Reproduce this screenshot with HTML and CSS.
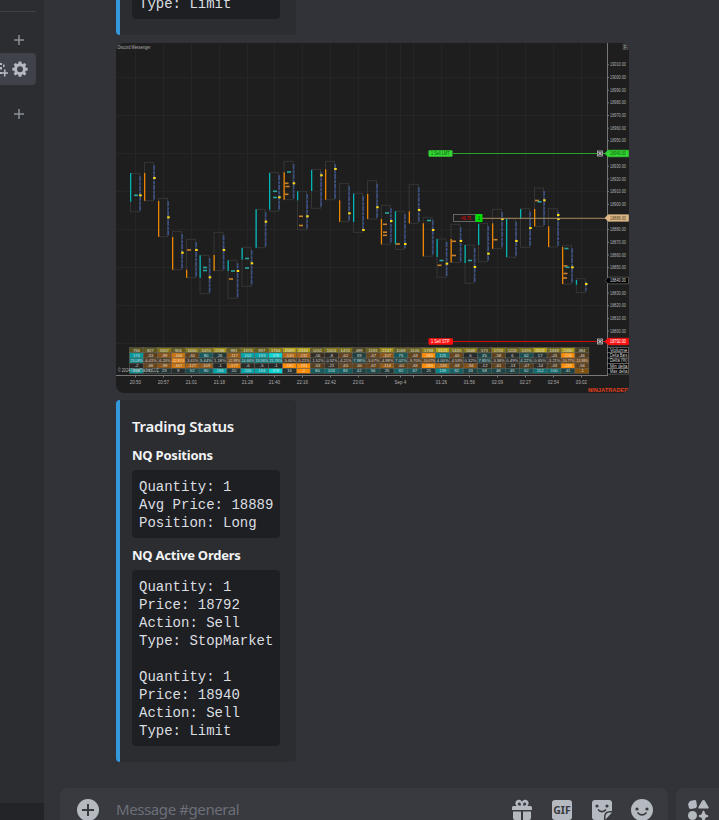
FILE: index.html
```html
<!DOCTYPE html>
<html lang="en">
<head>
<meta charset="utf-8">
<title>#general</title>
<link rel="stylesheet" href="styles.css">
</head>
<body>
<div class="app">
  <aside class="sidebar">
    <div class="channels">
      <div class="divider"></div>
      <div class="category first"><svg class="plus" viewBox="0 0 12 12"><path d="M6 1v10M1 6h10"/></svg></div>
      <div class="channel">
        <svg class="invite" viewBox="0 0 8 16"><path d="M0 2h2v2H0zM3 3.500h1.500V6H3zM0 6h2v2.500H0zM0 11h2v2H0zM4 8.500h1.500v2.700H8v1.500H5.500v2.800H4v-2.800H1.800v-1.500H4z"/></svg>
        <svg class="gear" viewBox="0 0 16 16"><path fill-rule="evenodd" d="M6.700.5h2.600l.4 2 1.200.5L12.600 1.900l1.700 1.800-1.100 1.600.5 1.300 2 .3v2.500l-2 .4-.5 1.200 1.100 1.700-1.700 1.700-1.700-1.100-1.200.5-.4 2H6.700l-.4-2-1.200-.5-1.700 1.100-1.700-1.700 1.100-1.700-.5-1.200-2-.4V6.900l2-.3.500-1.300-1.100-1.600L3.400 1.900 5.100 3l1.200-.5zM8 5.200a3 3 0 1 0 0 6 3 3 0 0 0 0-6z"/></svg>
      </div>
      <div class="category second"><svg class="plus" viewBox="0 0 12 12"><path d="M6 1v10M1 6h10"/></svg></div>
    </div>
    <div class="user-panel"></div>
  </aside>
  <main class="chat">
    <div class="messages">
      <section class="embed previous"><pre class="code">Type: Limit</pre></section>
      <svg id="chart" class="chart" viewBox="116 43 513 350"></svg>
      <section class="embed">
        <h3 class="title">Trading Status</h3>
        <h4 class="field">NQ Positions</h4>
        <pre class="code">Quantity: 1
Avg Price: 18889
Position: Long</pre>
        <h4 class="field orders">NQ Active Orders</h4>
        <pre class="code">Quantity: 1
Price: 18792
Action: Sell
Type: StopMarket

Quantity: 1
Price: 18940
Action: Sell
Type: Limit</pre>
      </section>
    </div>
    <footer class="composer">
      <div class="input">
        <svg class="add" viewBox="0 0 22 22"><circle cx="11" cy="11" r="11"/><path d="M11 5v12M5 11h12"/></svg>
        <span class="placeholder">Message #general</span>
        <div class="tools">
          <svg viewBox="0 0 24 24"><path class="fg" d="M2 9.500q0-1.500 1.500-1.500h3.200A3.500 3.500 0 1 1 12 3.700 3.500 3.500 0 1 1 17.300 8h3.200q1.500 0 1.500 1.500V12H2zM3 13.500h8V22H5q-2 0-2-2zM13 13.500h8V20q0 2-2 2h-6z"/><path class="hole" d="M11 7.500H9a1.500 1.500 0 1 1 1.700-2zM13 7.500h2a1.500 1.500 0 1 0-1.700-2z"/></svg>
          <svg viewBox="0 0 24 24"><rect class="fg" x="2" y="2" width="20" height="20" rx="3"/><text class="gif" x="12" y="16">GIF</text></svg>
          <svg viewBox="0 0 24 24"><path class="fg" d="M5 2h14q3 0 3 3v8h-2q-6 0-6 6v3H5q-3 0-3-3V5q0-3 3-3zM15.500 21.500V19q0-4.500 4.500-4.500h2z"/><g class="hole"><circle cx="7" cy="8" r="1.600"/><circle cx="17" cy="8" r="1.600"/></g><path class="smile" d="M8.500 12q3.500 3.500 7 0"/></svg>
          <svg viewBox="0 0 24 24"><circle class="fg" cx="12" cy="12" r="11"/><g class="hole"><circle cx="7" cy="11" r="1.600"/><circle cx="17" cy="11" r="1.600"/></g><path class="smile" d="M8 15q4 4 8 0"/></svg>
        </div>
      </div>
      <div class="apps">
        <svg viewBox="0 0 24 24"><path class="fg" d="M4 3l5-1q1 0 1.200 1l.8 5-1 2-5 1q-1.500 0-2-1L2 6zM17.500 2q1 0 1.500 1l3.500 6q.5 1.500-1 1.500h-8q-1.500 0-1-1.500L16 3q.5-1 1.500-1zM17.500 12.500q1 0 1.500 2.500 0 1 1 1.500 2.500.500 2.500 1.500t-2.500 1.500q-1 .500-1 1.500-.500 2.500-1.500 2.500T16 21q0-1-1-1.500-2.500-.500-2.500-1.500t2.500-1.500q1-.500 1-1.500.500-2.500 1.500-2.500z"/><circle class="fg" cx="6.500" cy="17.500" r="4.500"/></svg>
      </div>
    </footer>
  </main>
</div>
<script src="chart.js"></script>
</body>
</html>
```
FILE: styles.css
```css
* { box-sizing: border-box; }
body { margin: 0; background: #313338; color: #dbdee1; font-family: "Noto Sans", sans-serif; overflow: hidden; }
.app { display: flex; height: 820px; width: 719px; overflow: hidden; }
.sidebar { display: flex; flex-direction: column; width: 44px; background: #2b2d31; }
.channels { flex: 1; padding-top: 11px; }
.divider { width: 36px; height: 1px; background: #3f4147; }
.category { display: flex; justify-content: flex-end; width: 25px; }
.category.first { margin-top: 22px; }
.category.second { margin-top: 23px; }
.plus { width: 12px; height: 12px; fill: none; stroke: #8b8e96; stroke-width: 1.5; }
.channel { display: flex; align-items: center; gap: 4px; width: 36px; height: 32px; margin-top: 7px; border-radius: 0 4px 4px 0; background: #404249; }
.channel svg { fill: #b5bac1; height: 16px; }
.invite { width: 8px; }
.gear { width: 16px; }
.user-panel { height: 17px; background: #232428; }
.chat { display: flex; flex-direction: column; flex: 1; min-width: 0; }
.messages { display: flex; flex-direction: column; align-items: flex-start; height: 788px; padding-left: 72px; }
.embed { width: 180px; height: 362px; margin-top: 7px; padding: 16px 16px 16px 12px; border-left: 4px solid #3498db; border-radius: 4px; background: #2b2d31; }
.embed.previous { display: flex; align-items: flex-end; height: 35px; margin-top: 0; border-radius: 0 0 4px 4px; }
.chart { width: 513px; height: 350px; margin-top: 8px; border-radius: 8px; background: #1e1e1e; }
.title, .field { margin: 0; color: #f2f3f5; white-space: nowrap; }
.title { height: 20px; font-size: 15px; font-weight: 600; line-height: 20px; letter-spacing: -0.25px; }
.field { height: 18px; margin-top: 10px; font-size: 13px; font-weight: 700; line-height: 18px; letter-spacing: -0.22px; }
.orders { margin-top: 8px; }
.code { width: 148px; margin: 6px 0 0; padding: 8px 7px 6px; border-radius: 4px; background: #1e1f22; color: #dbdee1; font: 14px/18px "Liberation Mono", monospace; white-space: pre; }
.composer { display: flex; gap: 8px; height: 32px; padding-left: 16px; }
.input { display: flex; flex-shrink: 0; align-items: center; width: 608px; height: 44px; padding: 0 14px 0 17px; border-radius: 8px; background: #383a40; }
.add { width: 22px; height: 22px; fill: #b5bac1; }
.add path { stroke: #383a40; stroke-width: 2; }
.placeholder { flex: 1; margin: -2px 0 0 17px; color: #6d6f78; font-size: 15px; line-height: 22px; letter-spacing: -0.4px; }
.tools { display: flex; gap: 16px; }
.tools svg, .apps svg { width: 24px; height: 24px; }
.apps { flex-shrink: 0; width: 60px; height: 44px; padding: 10px; border-radius: 8px; background: #383a40; }
.fg { fill: #b5bac1; }
.hole { fill: #383a40; }
.smile { fill: none; stroke: #383a40; stroke-width: 1.7; stroke-linecap: round; }
.gif { fill: #383a40; font: 700 10.500px "Noto Sans", sans-serif; text-anchor: middle; }
.chart text { font-family: "Liberation Sans", sans-serif; }
.grid { stroke: #252525; stroke-width: 1; }
.axis { stroke: #777; stroke-width: 1; }
.tick { fill: #b0b0b0; font-size: 4.500px; }
.middle { text-anchor: middle; }
.cell { fill: #e4e4e4; font-size: 4.200px; text-anchor: middle; opacity: .9; }
.range { fill: none; stroke: #353535; stroke-width: 1; }
.profile { stroke: #3c5389; stroke-width: 1.500; stroke-dasharray: 5 1 3 .7; }
```
FILE: chart.js
```js
const chart = document.getElementById("chart");
const out = [];
const rect = (x, y, w, h, fill, extra = "") => out.push(`<rect x="${x}" y="${y}" width="${w}" height="${h}" fill="${fill}" ${extra}/>`);
const line = (x1, y1, x2, y2, cls, extra = "") => out.push(`<line x1="${x1}" y1="${y1}" x2="${x2}" y2="${y2}" class="${cls}" ${extra}/>`);
const text = (x, y, s, cls, extra = "") => out.push(`<text x="${x}" y="${y}" class="${cls}" ${extra}>${s}</text>`);

// Grid and time axis
const times = [[135.500,"20:50"],[163.500,"20:57"],[191.500,"21:01"],[219.500,"21:18"],[247.500,"21:28"],[274.500,"21:40"],[302.500,"22:16"],[330.500,"22:42"],[358.500,"23:01"],[386.500,""],[400.500,"Sep 4"],[413.500,""],[441.500,"01:26"],[469.500,"01:56"],[497.500,"02:09"],[525.500,"02:27"],[553.500,"02:54"],[581.500,"03:02"]];
for (const [x, s] of times) {
  line(x, 42, x, 375, "grid");
  line(x, 375, x, 377.500, "axis");
  text(x, 384, s, "tick middle");
}
for (let y = 77.500; y < 345; y += 38) line(116, y, 607, y, "grid");
line(116, 375.500, 607, 375.500, "axis");
line(607.500, 42, 607.500, 376, "axis");
for (let i = 0; i <= 22; i++) {
  const y = 64.800 + i * 12.680;
  line(607, y, 609, y, "axis");
  text(610, y + 1.600, (19010 - i * 10) + ".00", "tick", 'textLength="16" lengthAdjust="spacingAndGlyphs"');
}
text(117.500, 49, "Discord Messenger", "tick", 'textLength="33" lengthAdjust="spacingAndGlyphs"');

// left, range top, range bottom, direction, body top, body bottom, point of control
const bars = [
[130,173.300,211.700,1,173,201.700,195.300],[144,162.300,200.700,0,173,200.700,178],[158,198.300,236.700,0,201,236.700,217.300],
[172,231.300,269.700,0,237,269.700,252.700],[186,239.300,277.700,0,269.700,277.700,250],[199.500,255.300,293.700,1,255.300,278,277.300],
[213.500,232.300,270.700,0,255,270.700,250],[227.500,260.300,298.300,1,260.300,271,271],[241.500,247.300,286.300,1,248,259.700,263.300],
[255.500,209.300,247.700,1,209.300,247.700,221.700],[269,172.300,211.300,1,173,209.700,197.300],[283.500,161.300,199.700,0,172.300,199.700,183.300],
[297,191.300,229.700,1,191.300,200.300,216.300],[311,169.300,208.300,1,170,191,175.300],[325,161.300,199.700,0,169.300,199.700,169],
[339,183.300,221.700,0,200.300,221.700,213.300],[353,193.300,232.300,1,193.700,222,230],[367,180.700,219,0,194,219,207.300],
[380.800,205.300,244.300,0,219,244.300,221],[394.800,211.300,249.300,1,211.300,244.300,244],[408.700,184.300,223.300,0,211.300,223.300,210],
[422.700,217.300,256.300,0,223.300,256.300,230],[436.500,239,277.300,1,239,257,263.700],[450.500,224.300,262.500,0,239,262.500,241],
[464.500,245,283.300,1,245,263,267],[478,223.300,261.700,1,224,245,253.700],[492,209.300,248.700,0,223.300,248.700,219],
[506,218.700,257.300,1,219,257,241],[520,208.700,247.300,1,209,218.700,228],[534,188,226.300,0,209,226.300,200.300],
[548,208.700,247,0,226.300,247,219],[562,245.300,284,0,247,284,267.300],[575.800,278.700,292.700,1,280,284.700,284]];
for (const [x, t, b, up, bt, bb, poc] of bars) {
  out.push(`<rect class="range" x="${x + .5}" y="${t}" width="9" height="${b - t}"/>`);
  line(x + 10.200, t + 3, x + 10.200, b - 1, "profile");
  rect(x, bt, 1.300, bb - bt, up ? "#00b5b5" : "#ed8500");
  rect(x + 9.200, poc - 1, 2.500, 2, "#ffdc10");
}
rect(557, 214, 2.500, 2, "#ffdc10");

// Imbalance marks inside the bars
const marks = [[134,195.300,1],[187,250,0],[203,267.500,1],[203,270.500,1],[231,271,1],[229,279,0],[245,258.500,1],[245,268,1],
[273,191.300,1],[273,197.500,1],[287,172,1],[284.500,183.300,0],[285.500,186.500,0],[284.500,194.300,0],[299,216.300,0],[299,225.500,0],
[385,213,1],[383,224.300,0],[383,232.200,0],[383,235.300,0],[396,244,0],[427,220.500,1],[439.500,260.500,1],[437.500,265.300,0],[452,241.300,0],[452,255.500,0],
[468,260.500,1],[493.500,239.700,0],[535,200.500,0],[537.500,201.800,1],[564.500,248.500,1],[563.500,266,0],[565.500,267.300,1],[563.500,273.500,0],[563,278,0]];
for (const [x, y, up] of marks) rect(x, y - .8, 4, 1.600, up ? "#2aa6a0" : "#c9822a");

// Orders
rect(428.500, 150.300, 24, 6.500, "#35d435", 'rx="1"');
text(431, 155.200, "1  Sell LMT", "tick", 'style="fill:#075d07" textLength="18.500" lengthAdjust="spacingAndGlyphs"');
line(453, 153.500, 606, 153.500, "", 'stroke="#2aa52a"');
line(482, 218.300, 606, 218.300, "", 'stroke="#a88a60"');
rect(453.500, 214.500, 22, 7, "#1e1e1e", 'stroke="#666"');
text(460, 220, "-49.75", "tick", 'style="fill:#e00000" textLength="11" lengthAdjust="spacingAndGlyphs"');
rect(475.500, 214, 7, 8, "#00dc00");
text(478, 220, "1", "tick", 'style="fill:#064906"');
rect(428.500, 338.300, 24.500, 6.500, "#ff1010", 'rx="1"');
text(431, 343.200, "1  Sell STP", "tick", 'style="fill:#fff" textLength="18.500" lengthAdjust="spacingAndGlyphs"');
line(453, 341.500, 606, 341.500, "", 'stroke="#d01010"');
const tag = (y, fill, color, s, stroke) => {
  out.push(`<path d="M605 ${y}l3-3.300h20.500v6.600H608z" fill="${fill}" stroke="${stroke}" stroke-width=".6"/>`);
  text(610, y + 1.600, s, "tick", `style="fill:${color}" textLength="16" lengthAdjust="spacingAndGlyphs"`);
};
tag(153.500, "#35d435", "#075d07", "18940.00", "#35d435");
tag(218, "#deb887", "#4d3a20", "18889.00", "#deb887");
tag(280.500, "#000", "#ddd", "18840.00", "#777");
tag(341.500, "#ff1010", "#fff", "18792.00", "#ff1010");
for (const y of [153.500, 341.500]) {
  rect(597.500, y - 2.500, 5, 5, "#333", 'stroke="#bbb" stroke-width=".8"');
  out.push(`<path d="M598.500 ${y - 1.500}l3 3m0-3l-3 3" stroke="#fff" stroke-width=".9"/>`);
}
rect(623, 44.500, 5, 5, "#333", 'stroke="#666" stroke-width=".5"');
text(624, 48.700, "F", "tick");

// Volume and delta table
const rows = [
"794 827 1557 906 1660 1470 2196 981 1376 997 1764 2589 2532 1052 1524 1474 489 1181 2147 1069 1105 1768 3123 1435 1648 573 1726 1226 1470 2621 1339 2390 384",
"174 -53 -99 -166 -60 80 26 -117 202 193 378 -145 -132 -16 -8 -62 39 -67 -107 75 -63 -180 125 -65 6 45 -58 6 62 17 -43 -226 -46",
"23.08% -6.41% -6.20% -32.81% -3.61% 5.44% 1.18% -12.99% 14.66% 19.36% 21.78% -5.60% -5.21% -1.52% -0.52% -4.21% 7.98% -5.67% -4.98% 7.02% -5.70% -10.07% 4.00% -4.53% 0.32% 7.85% -3.36% 0.49% 4.22% 0.65% -3.21% -10.77% -11.98%",
"-2 -66 -99 -167 -127 -109 -1 -177 -6 -5 -1 -182 -191 -53 -21 -65 -60 -67 -114 -60 -65 -180 -133 -68 -94 -12 -61 -13 -47 -14 -43 -226 -56",
"159 11 23 9 52 80 196 20 206 194 378 16 -2 80 103 83 42 56 25 92 67 21 139 92 43 58 48 45 62 112 100 41 -1"].map(r => r.split(" "));
const mix = (a, b, k) => "rgb(" + a.map((v, i) => Math.round(v + (b[i] - v) * Math.min(1, k))) + ")";
const dark = [38, 38, 38], teal = [0, 165, 170], orange = [225, 125, 10], olive = [185, 165, 20];
rows.forEach((row, r) => row.forEach((s, i) => {
  const v = parseFloat(s), x = 129.500 + i * 13.920, y = 347.700 + r * 5.150;
  let fill;
  if (r === 0) fill = mix([55, 52, 35], olive, v / 2700);
  else if (r === 4 && v < 0) fill = i === 12 ? "#ff8c00" : "#84520c";
  else if (s === "378") fill = "#00d5d5";
  else if (r !== 2 && v <= -180) fill = "#ff8c00";
  else fill = mix(dark, v < 0 ? orange : teal, Math.abs(v) / (r === 2 ? 30 : 190));
  rect(x, y, 13.920, 5.150, fill, 'stroke="#66655c" stroke-width=".5"');
  text(x + 6.960, y + 4.100, s, "cell", r === 2 && s.length > 5 ? 'textLength="12.500" lengthAdjust="spacingAndGlyphs"' : "");
}));
text(118, 372, "© 2024 NinjaTrader, LLC", "tick", 'style="fill:#bbb" textLength="41" lengthAdjust="spacingAndGlyphs"');
["Volume", "Delta Bars", "Delta (%)", "Min delta", "Max delta"].forEach((s, i) => {
  rect(607.500, 347.500 + i * 5.300, 21, 5.300, "#000", 'stroke="#888" stroke-width=".6"');
  text(610, 351.800 + i * 5.300, s, "tick", 'style="fill:#ddd" textLength="17.500" lengthAdjust="spacingAndGlyphs"');
});
text(588, 391.500, "NINJATRADER", "", 'fill="#e5401e" font-size="5.500" font-weight="700" textLength="40.500" lengthAdjust="spacingAndGlyphs"');
chart.innerHTML = out.join("");
```
